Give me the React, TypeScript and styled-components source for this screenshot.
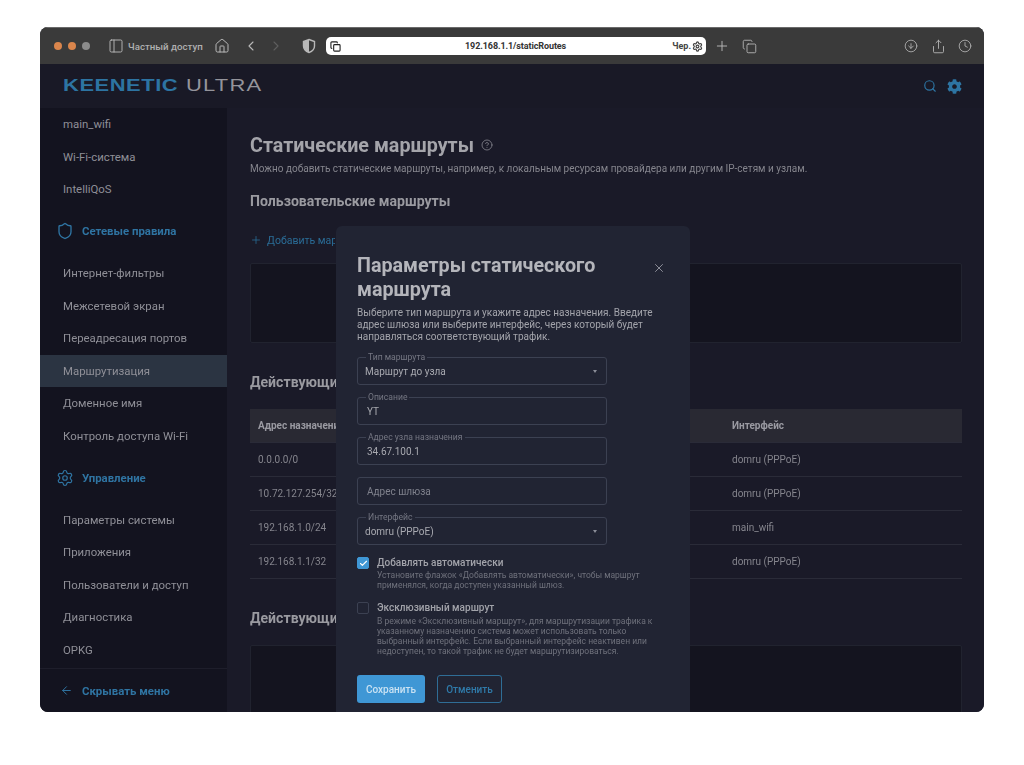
import React from "react";
import styled, { createGlobalStyle } from "styled-components";
import { ArrowLeft, Check, ChevronLeft, ChevronRight, CircleArrowDown, CircleHelp, Clock, Copy, Home, PanelLeft, Plus, Search, Settings, Share, Shield, X } from "lucide-react";
import { FaCog } from "react-icons/fa";

const Global = createGlobalStyle`
  html, body { margin: 0; padding: 0; background: #fff; }
  body { font-family: Roboto, "Liberation Sans", "Noto Sans", sans-serif; }
  * { box-sizing: border-box; }
`;

const Page = styled.div`
  width: 1024px;
  height: 765px;
  padding: 27px 40px 53px;
  background: #fff;
  overflow: hidden;
`;
const Win = styled.div`
  width: 944px;
  height: 685px;
  border-radius: 8px;
  overflow: hidden;
  display: flex;
  flex-direction: column;
  background: #191926;
  filter: blur(0.5px);
`;
const TitleBar = styled.div`
  height: 37px;
  flex: none;
  background: #3a3a3a;
  border-top: 1px solid #6a6a6a;
  display: flex;
  align-items: center;
  padding: 0 11px 0 14px;
  color: #b4b4b4;
`;
const Lights = styled.div`
  display: flex;
  gap: 6px;
  width: 36px;
`;
const Light = styled.span<{ $c: string }>`
  width: 8px;
  height: 8px;
  border-radius: 50%;
  background: ${(p) => p.$c};
`;
const Tool = styled.span<{ $ml: number; $dim?: boolean; $dark?: boolean }>`
  display: flex;
  width: 16px;
  height: 16px;
  flex: none;
  align-items: center;
  justify-content: center;
  margin-left: ${(p) => p.$ml}px;
  color: ${(p) => (p.$dark ? "#222" : p.$dim ? "#5e5e5e" : "#b8b8b8")};
`;
const Private = styled.span`
  width: 75px;
  margin-left: 4px;
  font-size: 9.7px;
  font-weight: 500;
  white-space: nowrap;
  color: #b0b0b0;
`;
const Address = styled.div`
  width: 380px;
  height: 18px;
  margin-left: 9px;
  flex: none;
  background: #fff;
  border-radius: 5px;
  display: flex;
  align-items: center;
  justify-content: space-between;
  padding: 0 3px 0 1px;
  color: #333;
`;
const Url = styled.span`
  margin-left: 16px;
  font-size: 9px;
  font-weight: 700;
  color: #333;
  letter-spacing: -0.1px;
`;
const Cloud = styled.span`
  font-size: 9px;
  font-weight: 700;
  color: #444;
  display: flex;
  align-items: center;
  gap: 1px;
`;
const Spacer = styled.span`
  flex: 1;
`;
const AppHeader = styled.header`
  height: 44px;
  flex: none;
  padding: 0 22px 0 23px;
  display: flex;
  align-items: center;
  background: #191926;
`;
const Word = styled.span<{ $w: number; $bold?: boolean }>`
  display: inline-block;
  width: ${(p) => p.$w}px;
  font-family: "Liberation Sans", sans-serif;
  font-size: 16px;
  line-height: 16px;
  font-weight: ${(p) => (p.$bold ? 700 : 400)};
  letter-spacing: ${(p) => (p.$bold ? 0.4 : 0.9)}px;
  color: ${(p) => (p.$bold ? "#2d74a2" : "#94949b")};
  transform: scaleX(1.37);
  transform-origin: left center;
  white-space: nowrap;
`;
const WordGap = styled.span`
  width: 9px;
`;
const HeadTools = styled.div`
  margin-left: auto;
  display: flex;
  align-items: center;
  gap: 10px;
  color: #2d74a2;
`;
const Body = styled.div`
  flex: 1;
  min-height: 0;
  display: flex;
  position: relative;
`;
const Side = styled.nav`
  width: 187px;
  flex: none;
  background: #13131f;
  display: flex;
  flex-direction: column;
`;
const Item = styled.div<{ $active?: boolean }>`
  height: 32.6px;
  flex: none;
  padding-left: 23px;
  display: flex;
  align-items: center;
  font-size: 11.4px;
  color: #8f8f97;
  background: ${(p) => (p.$active ? "#2b3442" : "transparent")};
`;
const Section = styled.div`
  height: 51px;
  flex: none;
  padding-left: 16px;
  display: flex;
  align-items: center;
  gap: 8px;
  font-size: 11.4px;
  font-weight: 700;
  color: #2f74a2;
`;
const Foot = styled.div`
  margin-top: auto;
  height: 44px;
  border-top: 1px solid #1e1e2b;
  padding-left: 20px;
  display: flex;
  align-items: center;
  gap: 9px;
  font-size: 11.4px;
  font-weight: 700;
  color: #2f74a2;
`;
const Main = styled.main`
  flex: 1;
  min-width: 0;
  background: #1a1a28;
  padding: 25px 22px 0 23px;
  overflow: hidden;
`;
const TitleRow = styled.div`
  display: flex;
  align-items: center;
  gap: 7px;
  height: 24px;
  color: #8f8f97;
`;
const H1 = styled.h1`
  margin: 0;
  font-size: 19.7px;
  font-weight: 700;
  color: #a4a4aa;
`;
const Sub = styled.p`
  margin: 5px 0 0;
  height: 14px;
  font-size: 10px;
  line-height: 14px;
  color: #85858d;
  white-space: nowrap;
`;
const H2 = styled.h2<{ $mt: number; $clip?: boolean }>`
  margin: ${(p) => p.$mt}px 0 0;
  width: ${(p) => (p.$clip ? "86px" : "auto")};
  overflow: hidden;
  font-size: 14.1px;
  line-height: 20px;
  font-weight: 700;
  color: #9a9aa0;
  white-space: nowrap;
`;
const AddRow = styled.div`
  margin-top: 21px;
  height: 16px;
  display: flex;
  align-items: center;
  gap: 5px;
  font-size: 10.5px;
  color: #2a6c96;
`;
const AddText = styled.span`
  width: 68px;
  overflow: hidden;
  white-space: nowrap;
`;
const EmptyBox = styled.div<{ $mt: number; $h: number }>`
  margin-top: ${(p) => p.$mt}px;
  height: ${(p) => p.$h}px;
  background: #14141f;
  border: 1px solid #21232f;
  border-radius: 2px;
`;
const Table = styled.div`
  margin-top: 17px;
`;
const Row = styled.div<{ $head?: boolean }>`
  height: 34px;
  display: grid;
  grid-template-columns: 474px 1fr;
  align-items: center;
  background: ${(p) => (p.$head ? "#292933" : "transparent")};
  border-bottom: 1px solid #2a2b38;
  font-size: 10px;
  font-weight: ${(p) => (p.$head ? 700 : 400)};
  color: ${(p) => (p.$head ? "#9a9aa2" : "#85858d")};
`;
const Cell = styled.span`
  padding-left: 8px;
`;
const ClipText = styled.span`
  display: block;
  width: 78px;
  overflow: hidden;
  white-space: nowrap;
`;
const Modal = styled.section`
  position: absolute;
  left: 296px;
  top: 118px;
  width: 354px;
  height: 490px;
  background: #212433;
  border-radius: 6px 6px 0 0;
  padding: 28px 0 0 21px;
  overflow: hidden;
`;
const Close = styled.span`
  position: absolute;
  top: 35px;
  right: 24px;
  display: flex;
  color: #9a9ca6;
`;
const ModalTitle = styled.h3`
  margin: 0;
  font-size: 19.7px;
  line-height: 24px;
  font-weight: 700;
  color: #b4b5bb;
`;
const Desc = styled.p`
  margin: 5px 0 14px;
  font-size: 10px;
  line-height: 12px;
  color: #a3a4ab;
  white-space: nowrap;
`;
const Fields = styled.div`
  display: flex;
  flex-direction: column;
  gap: 12px;
  width: 250px;
`;
const Field = styled.div<{ $select?: boolean }>`
  position: relative;
  height: 28px;
  border: 1px solid #3c4152;
  border-radius: 3px;
  display: flex;
  align-items: center;
  padding: 1px 9px 0 ${(p) => (p.$select ? 7 : 9)}px;
  font-size: 10px;
  color: #a8a9b0;
`;
const Legend = styled.span`
  position: absolute;
  top: -5px;
  left: 8px;
  padding: 0 2px;
  background: #212433;
  font-size: 8.6px;
  line-height: 9px;
  color: #757783;
`;
const Placeholder = styled.span`
  color: #7f818c;
  font-size: 10px;
`;
const Caret = styled.span`
  margin-left: auto;
  width: 0;
  height: 0;
  border-left: 2px solid transparent;
  border-right: 2px solid transparent;
  border-top: 3px solid #8b8d98;
`;
const CheckRow = styled.div`
  margin-top: 11px;
  display: grid;
  grid-template-columns: 12px 1fr;
  column-gap: 8px;
`;
const Box = styled.span<{ $on?: boolean }>`
  width: 12px;
  height: 12px;
  margin-top: 1px;
  border-radius: 2px;
  display: flex;
  align-items: center;
  justify-content: center;
  color: #fff;
  background: ${(p) => (p.$on ? "#3f97d5" : "transparent")};
  border: 1px solid ${(p) => (p.$on ? "#3f97d5" : "#3c4152")};
`;
const CheckLabel = styled.span`
  height: 14px;
  font-size: 10px;
  line-height: 14px;
  font-weight: 500;
  color: #a2a3aa;
`;
const Hint = styled.span<{ $mt: number }>`
  grid-column: 2;
  margin-top: ${(p) => p.$mt}px;
  font-size: 8.5px;
  line-height: 10px;
  color: #6f717c;
  white-space: nowrap;
`;
const Actions = styled.div`
  margin-top: 19px;
  display: flex;
  gap: 12px;
`;
const Primary = styled.button`
  width: 68px;
  height: 28px;
  padding: 0;
  border: 0;
  border-radius: 3px;
  background: #3f97d5;
  color: #c9e2f3;
  font: 500 10px Roboto, sans-serif;
`;
const Secondary = styled.button`
  width: 65px;
  height: 28px;
  padding: 0;
  background: transparent;
  border: 1px solid #2f6d96;
  border-radius: 3px;
  color: #2f7aa9;
  font: 500 10px Roboto, sans-serif;
`;

const HalfShield = () => (
  <svg width="16" height="16" viewBox="0 0 16 16">
    <path d="M8 1.5 13.5 3.5V8c0 3.2-2.3 5.4-5.5 6.5C4.8 13.4 2.5 11.2 2.5 8V3.5Z" fill="none" stroke="#b8b8b8" strokeWidth="1.4" />
    <path d="M8 1.5 2.5 3.5V8c0 3.2 2.3 5.4 5.5 6.5Z" fill="#b8b8b8" />
  </svg>
);

const ite1 = ["main_wifi", "Wi-Fi-система", "IntelliQoS"];
const ite2 = ["Интернет-фильтры", "Межсетевой экран", "Переадресация портов", "Маршрутизация", "Доменное имя", "Контроль доступа Wi-Fi"];
const ite3 = ["Параметры системы", "Приложения", "Пользователи и доступ", "Диагностика", "OPKG"];
const rows = [
  ["0.0.0.0/0", "domru (PPPoE)"],
  ["10.72.127.254/32", "domru (PPPoE)"],
  ["192.168.1.0/24", "main_wifi"],
  ["192.168.1.1/32", "domru (PPPoE)"],
];

export default function App() {
  return (
    <Page>
      <Global />
      <Win>
        <TitleBar>
          <Lights>
            <Light $c="#d9854c" />
            <Light $c="#d9854c" />
            <Light $c="#8b8b8b" />
          </Lights>
          <Tool $ml={18}><PanelLeft size={16} strokeWidth={1.4} /></Tool>
          <Private>Частный доступ</Private>
          <Tool $ml={11}><Home size={16} strokeWidth={1.5} /></Tool>
          <Tool $ml={13}><ChevronLeft size={16} strokeWidth={1.6} /></Tool>
          <Tool $ml={9} $dim><ChevronRight size={16} strokeWidth={1.6} /></Tool>
          <Tool $ml={17}><HalfShield /></Tool>
          <Address>
            <Tool $ml={0} $dark><Copy size={11} strokeWidth={2.4} /></Tool>
            <Url>192.168.1.1/staticRoutes</Url>
            <Cloud>Чер.<Settings size={11} strokeWidth={2.6} /></Cloud>
          </Address>
          <Tool $ml={8}><Plus size={16} strokeWidth={1.4} /></Tool>
          <Tool $ml={11}><Copy size={15} strokeWidth={1.4} /></Tool>
          <Spacer />
          <Tool $ml={0}><CircleArrowDown size={14} strokeWidth={1.4} /></Tool>
          <Tool $ml={11}><Share size={15} strokeWidth={1.4} /></Tool>
          <Tool $ml={11}><Clock size={14} strokeWidth={1.4} /></Tool>
        </TitleBar>
        <AppHeader>
          <Word $w={114} $bold>KEENETIC</Word>
          <WordGap />
          <Word $w={75}>ULTRA</Word>
          <HeadTools>
            <Search size={14} strokeWidth={2} />
            <FaCog size={15} />
          </HeadTools>
        </AppHeader>
        <Body>
          <Side>
            {ite1.map((t) => <Item key={t}>{t}</Item>)}
            <Section><Shield size={18} strokeWidth={1.8} />Сетевые правила</Section>
            {ite2.map((t) => <Item key={t} $active={t === "Маршрутизация"}>{t}</Item>)}
            <Section><Settings size={18} strokeWidth={1.6} />Управление</Section>
            {ite3.map((t) => <Item key={t}>{t}</Item>)}
            <Foot><ArrowLeft size={13} strokeWidth={1.8} />Скрывать меню</Foot>
          </Side>
          <Main>
            <TitleRow>
              <H1>Статические маршруты</H1>
              <CircleHelp size={12} strokeWidth={1.5} />
            </TitleRow>
            <Sub>Можно добавить статические маршруты, например, к локальным ресурсам провайдера или другим IP-сетям и узлам.</Sub>
            <H2 $mt={15}>Пользовательские маршруты</H2>
            <AddRow><Plus size={12} strokeWidth={1.6} /><AddText>Добавить маршрут</AddText></AddRow>
            <EmptyBox $mt={15} $h={80} />
            <H2 $mt={29} $clip>Действующие маршруты</H2>
            <Table>
              <Row $head><Cell><ClipText>Адрес назначения</ClipText></Cell><Cell>Интерфейс</Cell></Row>
              {rows.map(([a, b]) => (
                <Row key={a}><Cell><ClipText>{a}</ClipText></Cell><Cell>{b}</Cell></Row>
              ))}
            </Table>
            <H2 $mt={29} $clip>Действующие маршруты IPv6</H2>
            <EmptyBox $mt={17} $h={80} />
          </Main>
          <Modal>
            <Close><X size={14} strokeWidth={1.5} /></Close>
            <ModalTitle>Параметры статического<br />маршрута</ModalTitle>
            <Desc>
              Выберите тип маршрута и укажите адрес назначения. Введите<br />
              адрес шлюза или выберите интерфейс, через который будет<br />
              направляться соответствующий трафик.
            </Desc>
            <Fields>
              <Field $select><Legend>Тип маршрута</Legend>Маршрут до узла<Caret /></Field>
              <Field><Legend>Описание</Legend>YT</Field>
              <Field><Legend>Адрес узла назначения</Legend>34.67.100.1</Field>
              <Field><Placeholder>Адрес шлюза</Placeholder></Field>
              <Field $select><Legend>Интерфейс</Legend>domru (PPPoE)<Caret /></Field>
            </Fields>
            <CheckRow>
              <Box $on><Check size={9} strokeWidth={3} /></Box>
              <CheckLabel>Добавлять автоматически</CheckLabel>
              <Hint $mt={0}>
                Установите флажок «Добавлять автоматически», чтобы маршрут<br />
                применялся, когда доступен указанный шлюз.
              </Hint>
            </CheckRow>
            <CheckRow>
              <Box />
              <CheckLabel>Эксклюзивный маршрут</CheckLabel>
              <Hint $mt={1}>
                В режиме «Эксклюзивный маршрут», для маршрутизации трафика к<br />
                указанному назначению система может использовать только<br />
                выбранный интерфейс. Если выбранный интерфейс неактивен или<br />
                недоступен, то такой трафик не будет маршрутизироваться.
              </Hint>
            </CheckRow>
            <Actions>
              <Primary>Сохранить</Primary>
              <Secondary>Отменить</Secondary>
            </Actions>
          </Modal>
        </Body>
      </Win>
    </Page>
  );
}
